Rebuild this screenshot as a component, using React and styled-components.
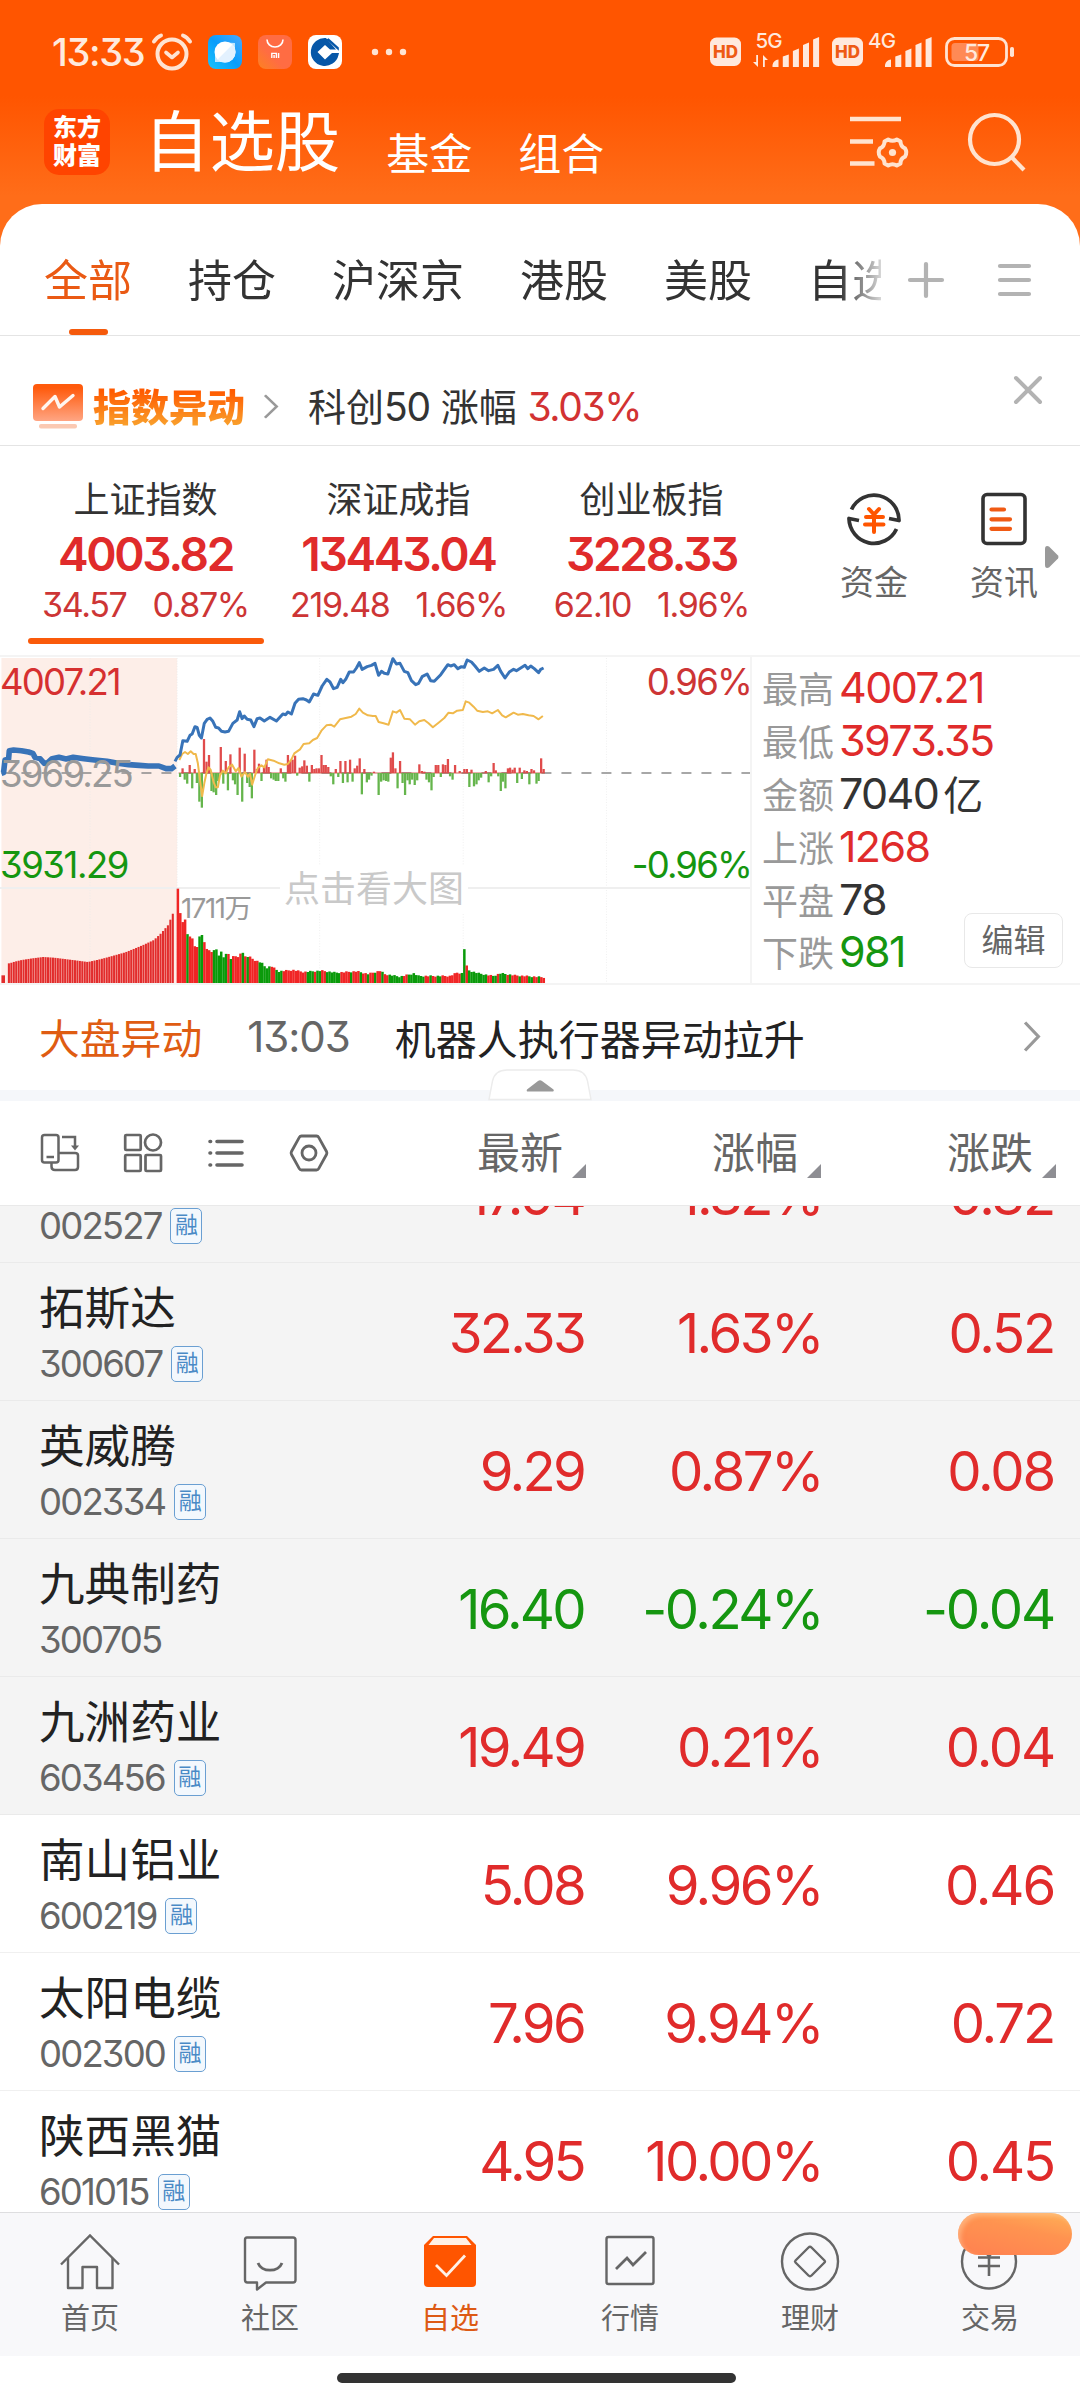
// App.jsx
import React from "react";
import styled, { createGlobalStyle } from "styled-components";

const RED = "#e02b2b";
const GREEN = "#159610";
const ORANGE = "#ff5500";

const GlobalStyle = createGlobalStyle`
  * {
    box-sizing: border-box;
  }

  body {
    margin: 0;
    background: #fff;
    font-family: Inter, "Noto Sans CJK SC", sans-serif;
    font-feature-settings: "cv09" 1;
    color: #333;
  }

  svg {
    display: block;
    flex: none;
    overflow: visible;
  }
`;

const Screen = styled.div`
  width: 1080px;
  height: 2400px;
  overflow: hidden;
  display: flex;
  flex-direction: column;
  white-space: nowrap;
`;

const Num = styled.span`
  font-size: ${({ size }) => size}px;
  font-weight: ${({ weight }) => weight || 400};
  color: ${({ color }) => color || "inherit"};
  letter-spacing: ${({ track = -0.05 }) => track}em;
`;

/* ---------- header ---------- */

const Header = styled.header`
  height: 250px;
  margin-bottom: -46px;
  background: linear-gradient(#ff5500 0, #ff5500 96px, #ff6d19 196px);
  color: #fff;
`;

const StatusBar = styled.div`
  height: 104px;
  padding: 0 65px 0 52px;
  display: flex;
  align-items: center;
  color: #ffeadd;
`;

const AppIcons = styled.div`
  display: flex;
  align-items: center;
  gap: 16px;
  margin: 0 auto 0 8px;
`;

const MoreApps = styled.div`
  margin-left: 13px;
`;

const Signals = styled.div`
  display: flex;
  align-items: center;
  gap: 12px;
`;

const TitleBar = styled.div`
  height: 76px;
  padding: 0 54px 0 44px;
  display: flex;
  align-items: center;
`;

const Logo = styled.div`
  width: 66px;
  height: 66px;
  margin-right: 34px;
  border-radius: 15px;
  background: #ff4400;
  font-size: 24px;
  font-weight: 900;
  line-height: 28px;
  padding-top: 5px;
  text-align: center;
`;

const Title = styled.h1`
  margin: 2px 0 0;
  font-size: 65.4px;
  font-weight: 400;
  line-height: 76px;
`;

const SubTitle = styled.span`
  font-size: 43px;
  line-height: 50px;
  margin: 23px 0 0 46px;
`;

const HeaderIcons = styled.div`
  margin-left: auto;
  display: flex;
  gap: 58px;
`;

/* ---------- group tabs ---------- */

const Card = styled.div`
  height: 132px;
  flex: none;
  border-bottom: 1px solid #e4e4e4;
  border-radius: 42px 42px 0 0;
  background: #fff;
  display: flex;
  align-items: center;
  padding: 0 49px 0 44px;
`;

const Groups = styled.nav`
  width: 837px;
  height: 131px;
  overflow: hidden;
  display: flex;
  gap: 56px;
  mask-image: linear-gradient(90deg, #000 795px, rgba(0, 0, 0, 0.2) 837px);
`;

const Group = styled.span`
  flex: none;
  font-size: 44px;
  line-height: 154px;
  color: ${({ active }) => (active ? "#ea5a14" : "#333")};
  height: 131px;
  display: flex;
  flex-direction: column;
  align-items: center;

  &::after {
    content: "";
    width: 39px;
    height: 6px;
    flex: none;
    margin-top: -29px;
    border-radius: 3px;
    background: ${({ active }) => (active ? "#f55a0c" : "transparent")};
  }
`;

const GroupTools = styled.div`
  flex: 1;
  display: flex;
  justify-content: space-between;
  padding: 21px 0 0 27px;
`;

/* ---------- notice ---------- */

const Notice = styled.div`
  height: 110px;
  flex: none;
  border-bottom: 1px solid #e4e4e4;
  padding: 32px 38px 0 33px;
  display: flex;
  align-items: center;
`;

const NoticeName = styled.b`
  margin: 0 19px 0 10px;
  font-size: 38px;
  font-weight: 900;
  line-height: 46px;
  background: linear-gradient(#ff5a00 15%, #f9a02c 90%);
  background-clip: text;
  -webkit-background-clip: text;
  color: transparent;
`;

const NoticeText = styled.span`
  margin-left: 30px;
  font-size: 38px;
  line-height: 46px;
`;

const CloseButton = styled.div`
  margin: -33px 0 0 auto;
`;

/* ---------- indexes ---------- */

const IndexRow = styled.div`
  height: 209px;
  flex: none;
  display: flex;
  padding: 0 19px;
`;

const IndexCell = styled.div`
  width: 253px;
  padding-top: 32px;
  display: flex;
  flex-direction: column;
  align-items: center;
  color: ${RED};

  &::after {
    content: "";
    width: 236px;
    height: 6px;
    margin-top: 13px;
    border-radius: 3px;
    background: ${({ active }) => (active ? "#fa5a0a" : "transparent")};
  }
`;

const IndexName = styled.span`
  font-size: 36px;
  line-height: 44px;
  color: #333;
`;

const IndexValue = styled(Num)`
  line-height: 52px;
  margin-top: 6px;
`;

const IndexChange = styled.div`
  display: flex;
  gap: 26px;
  line-height: 40px;
  margin-top: 5px;
  color: #cd3535;
`;

const Shortcuts = styled.div`
  margin-left: 31px;
  display: flex;
`;

const Shortcut = styled.div`
  width: 130px;
  padding-top: 45px;
  display: flex;
  flex-direction: column;
  align-items: center;
  gap: 13px;
  font-size: 34px;
  line-height: 46px;
  color: #666;
`;

const MoreArrow = styled.div`
  padding-top: 99px;
  margin-left: -24px;
`;

/* ---------- chart ---------- */

const ChartPanel = styled.div`
  height: 330px;
  flex: none;
  border-top: 2px solid #f4f4f4;
  border-bottom: 2px solid #f4f4f4;
  display: flex;
`;

const ChartBox = styled.div`
  position: relative;
  width: 752px;
  border-right: 2px solid #f4f4f4;
`;

/* axis captions float over the plot */
const Caption = styled(Num)`
  position: absolute;
  top: ${({ top }) => top}px;
  ${({ left }) => (left === undefined ? "right: -1px;" : `left: ${left}px;`)}
  line-height: 36px;
`;

const ChartHint = styled.span`
  position: absolute;
  top: 208px;
  left: 280px;
  width: 188px;
  background: #fff;
  text-align: center;
  font-size: 36px;
  line-height: 48px;
  color: #c9c9c9;
`;

const Stats = styled.div`
  position: relative;
  flex: 1;
  padding: 4px 0 0 10px;
`;

const Stat = styled.div`
  display: flex;
  align-items: center;
  gap: 5px;
  height: 52.8px;
  font-size: 36px;
  color: #999;
`;

const Unit = styled.span`
  font-size: 40px;
  color: #333;
`;

const EditButton = styled.div`
  position: absolute;
  right: 17px;
  top: 256px;
  width: 99px;
  height: 55px;
  border: 1px solid #e8e8e8;
  border-radius: 8px;
  background: #fff;
  font-size: 32px;
  line-height: 54px;
  text-align: center;
  color: #666;
`;

/* ---------- news ---------- */

const News = styled.div`
  position: relative;
  height: 116px;
  flex: none;
  border-bottom: 11px solid #f5f7fa;
  padding: 0 40px 2px 39px;
  display: flex;
  align-items: center;
  font-size: 40.8px;
  color: #222;
`;

const NewsTag = styled.span`
  color: #df5c12;
`;

const NewsTime = styled(Num)`
  color: #666;
  margin-left: 45px;
`;

const NewsText = styled.span`
  margin: 0 auto 0 45px;
  font-size: 41px;
`;

const Handle = styled.div`
  position: absolute;
  left: 488px;
  top: 84px;
`;

/* ---------- table ---------- */

const TableHead = styled.div`
  height: 105px;
  flex: none;
  border-bottom: 1px solid #e9e9e9;
  padding-left: 41px;
  display: flex;
  align-items: center;
  color: #666;
`;

const Tools = styled.div`
  width: 345px;
  display: flex;
  gap: 45px;
`;

const HeadCell = styled.div`
  width: ${({ width }) => width}px;
  display: flex;
  justify-content: flex-end;
  gap: 9px;
  font-size: 43px;
  line-height: 54px;

  &::after {
    content: "";
    width: 14px;
    height: 14px;
    margin-top: 38px;
    background: #8e8e93;
    clip-path: polygon(100% 0, 100% 100%, 0 100%);
  }
`;

const List = styled.div`
  height: 1006px;
  flex: none;
  overflow: hidden;
`;

const Row = styled.div`
  height: 138px;
  padding-left: 39px;
  display: flex;
  align-items: center;
  background: ${({ pinned }) => (pinned ? "#f4f4f4" : "#fff")};
  border-bottom: 1px solid ${({ pinned }) => (pinned ? "#eaeaea" : "#f0f0f0")};
  color: ${({ down }) => (down ? GREEN : RED)};

  &:first-child {
    margin-top: -81px;
  }
`;

const Stock = styled.div`
  width: 304px;
  align-self: flex-start;
  padding-top: 19px;
`;

const StockName = styled.div`
  height: 54px;
  font-size: 45.6px;
  line-height: 54px;
  color: #222;
`;

const StockCode = styled.div`
  margin-top: 8px;
  height: 40px;
  display: flex;
  align-items: center;
  gap: 9px;
  color: #666;
`;

const Badge = styled.span`
  width: 32px;
  height: 36px;
  border: 1.5px solid #6a9fd2;
  border-radius: 5px;
  background: #f3f8fd;
  color: #4a8ac6;
  font-size: 23px;
  line-height: 33px;
  text-align: center;
`;

const Cell = styled.div`
  width: ${({ width }) => width}px;
  padding-top: 2px;
  text-align: right;
`;

/* ---------- bottom bar ---------- */

const TabBar = styled.nav`
  height: 144px;
  flex: none;
  border-top: 1px solid #dedee0;
  background: #f8f8fa;
  display: flex;
`;

const Tab = styled.div`
  position: relative;
  width: 180px;
  padding-top: 18px;
  display: flex;
  flex-direction: column;
  align-items: center;
  font-size: 29px;
  line-height: 36px;
  gap: 10px;
  color: ${({ active }) => (active ? "#dd5a14" : "#666")};
`;

const Promo = styled.div`
  position: absolute;
  left: 58px;
  top: 0;
  width: 114px;
  height: 42px;
  border-radius: 21px;
  background: linear-gradient(12deg, #ff8550 15%, #ff9350 60%, #ffb257);
  box-shadow: inset 3px 3px 4px rgba(255, 205, 160, 0.5);
`;

const HomeBar = styled.div`
  width: 399px;
  height: 10px;
  margin: 17px auto 0 337px;
  border-radius: 5px;
  background: #333;
`;

/* ---------- icons ---------- */

const AlarmIcon = () => (
  <svg width="40" height="38" viewBox="0 0 40 38" fill="none" stroke="#ffe3d2" strokeLinecap="round">
    <circle cx="20" cy="21" r="14.5" strokeWidth="4" />
    <path d="M14 19.5l6 5 6-5" strokeWidth="3.6" strokeLinejoin="round" />
    <path d="M2 8.500q3-4.500 7-6M38 8.500q-3-4.500-7-6" strokeWidth="4" />
  </svg>
);

const BrowserIcon = () => (
  <svg width="34" height="34" viewBox="0 0 34 34">
    <defs>
      <linearGradient id="sky" x1="1" y1="0" x2="0" y2="1">
        <stop offset="0" stopColor="#4aa8fb" />
        <stop offset="0.5" stopColor="#0a9dfb" />
        <stop offset="1" stopColor="#18c4fb" />
      </linearGradient>
    </defs>
    <rect width="34" height="34" rx="8" fill="url(#sky)" />
    <path d="M7 27V19L19 27zM27 8V15L18 7.500z" fill="#bfe6fe" />
    <circle cx="17" cy="17" r="10.500" fill="#fff" />
    <path d="M24.500 9.500A10.500 10.500 0 0 1 9.500 24.500z" fill="#e3f1fe" />
  </svg>
);

const StoreIcon = () => (
  <svg width="34" height="34" viewBox="0 0 34 34" fill="none" stroke="#fff" strokeWidth="1.6">
    <defs>
      <linearGradient id="bag" x1="1" y1="0" x2="0" y2="1">
        <stop offset="0.6" stopColor="#ff6c43" />
        <stop offset="1" stopColor="#fd8220" />
      </linearGradient>
    </defs>
    <rect width="34" height="34" rx="8" fill="url(#bag)" stroke="none" />
    <path d="M9 4.500a8 7.500 0 0 0 16 0" />
    <path d="M13.800 23v-4.600h4.600V23M16.100 20v3M20.600 18v5" strokeWidth="1.4" />
  </svg>
);

const BankIcon = () => (
  <svg width="34" height="34" viewBox="0 0 34 34">
    <rect width="34" height="34" rx="8" fill="#fff" />
    <path
      d="M18 3A14 14 0 1 0 30.500 20L31 18H24L17 24.500L9.500 17L17 10l5 4.500h6z"
      fill="#0657a8"
    />
    <path d="M20.500 3.200l10.300 9.400v3.200L18.500 4.500z" fill="#0657a8" />
  </svg>
);

const DotsIcon = () => (
  <svg width="36" height="8" viewBox="0 0 36 8" fill="#ffe3d2">
    <circle cx="4" cy="4" r="3.200" />
    <circle cx="18" cy="4" r="3.200" />
    <circle cx="32" cy="4" r="3.200" />
  </svg>
);

const Signal = ({ label, x, width, arrows }) => (
  <svg width={width} height="40" viewBox={`0 0 ${width} 40`} fill="#ffe9dd">
    <rect y="5.500" width="31" height="28.500" rx="6.500" />
    <text x="15.500" y="26" fontSize="17" fontWeight="800" textAnchor="middle" fill="#ee5a15">
      HD
    </text>
    <text x={x - 17} y="16" fontSize="20.500" fontWeight="500" letterSpacing="-0.8">
      {label}
    </text>
    {arrows && (
      <path d="M48 23v12l-5-5h3.200v-7zM53 35V23l5 5h-3.200v7z" />
    )}
    <path
      d={`M${x} 35v-2q1-5 6-5.500v7.500zM${x + 10.300} 35V24.500l6-2V35zM${x + 20.400} 35V19l6-2.500V35zM${x + 30.500} 35V13l6-2.500V35zM${x + 40.600} 35V7.500l6-2.500V35z`}
    />
  </svg>
);

const BatteryIcon = () => (
  <svg width="70" height="32" viewBox="0 0 70 32">
    <rect x="1.500" y="2.500" width="60" height="27" rx="8" fill="none" stroke="#ffe3d2" strokeWidth="2.800" />
    <rect x="6.500" y="7" width="27" height="18" rx="3.500" fill="#ff8a55" />
    <rect x="65" y="11" width="4" height="10" rx="1.800" fill="#ffe3d2" />
    <text x="31.500" y="24.500" fontSize="23" fontWeight="500" textAnchor="middle" fill="#ffe9dd" letterSpacing="-1.200">
      57
    </text>
  </svg>
);

const ListSettingsIcon = () => (
  <svg width="60" height="58" viewBox="0 0 60 58" fill="none" stroke="#ffe3cf" strokeWidth="4.400">
    <path d="M0 7h51M0 29.500h23M0 51.500h24.500" />
    <path
      strokeWidth="4"
      strokeLinejoin="round"
      d="M38.200 27.500Q42.500 30 46.800 27.500L50.500 29.600Q50.500 34.500 55 36.400Q57.600 40.500 55 44.600Q50.500 46.500 50.500 51.400L46.800 53.500Q42.500 51 38.200 53.500L34.500 51.400Q34.500 46.500 30 44.600Q27.400 40.500 30 36.400Q34.500 34.500 34.500 29.600Z"
    />
    <circle cx="42.500" cy="40.500" r="3.600" fill="#ffe3cf" stroke="none" />
  </svg>
);

const SearchIcon = () => (
  <svg width="58" height="60" viewBox="0 0 58 60" fill="none" stroke="#ffe3cf" strokeWidth="4.200">
    <circle cx="26.500" cy="27.500" r="24.500" />
    <path d="M43.500 45L56 58" />
  </svg>
);

const PlusIcon = () => (
  <svg width="36" height="36" viewBox="0 0 36 36" stroke="#b3b3b3" strokeWidth="4.200" strokeLinecap="round">
    <path d="M2 18h32M18 2v32" />
  </svg>
);

const MenuIcon = () => (
  <svg width="33" height="36" viewBox="0 0 33 36" stroke="#b3b3b3" strokeWidth="4.200" strokeLinecap="round">
    <path d="M2 4h29M2 18h29M2 32h29" />
  </svg>
);

const NoticeIcon = () => (
  <svg width="50" height="46" viewBox="0 0 50 46">
    <defs>
      <linearGradient id="board" x1="0" y1="0" x2="0" y2="1">
        <stop offset="0.1" stopColor="#ff5a0c" />
        <stop offset="1" stopColor="#ffa583" />
      </linearGradient>
    </defs>
    <rect width="50" height="37" rx="4" fill="url(#board)" />
    <rect x="6" y="40" width="38" height="4.500" rx="2" fill="#fbc9b2" />
    <path d="M10 24.500l12-12 4.500 10.500L40 11.500" fill="none" stroke="#fff6f0" strokeWidth="3.400" strokeLinecap="round" strokeLinejoin="round" />
  </svg>
);

const Chevron = ({ width, height, stroke = "#999" }) => (
  <svg width={width} height={height} viewBox="0 0 15 30" preserveAspectRatio="none" fill="none" stroke={stroke} strokeWidth="3">
    <path d="M1 1.500L13.500 15L1 28.500" />
  </svg>
);

const CloseIcon = () => (
  <svg width="28" height="28" viewBox="0 0 28 28" stroke="#b3b3b3" strokeWidth="4" strokeLinecap="round">
    <path d="M2 2l24 24M26 2L2 26" />
  </svg>
);

const MoneyIcon = () => (
  <svg width="54" height="56" viewBox="0 0 54 56" fill="none" stroke="#333" strokeWidth="3.800">
    <path d="M4.500 18.500A25 25.500 0 0 1 52 29.500L42 27.500" strokeLinejoin="round" />
    <path d="M49.500 38A25 25.500 0 0 1 2 27.500L12 29.500" strokeLinejoin="round" />
    <path
      d="M22 18l5 5.500 5-5.500M19 26h17M18 33.500h18.500M27 24v17"
      stroke="#ff5500"
      strokeWidth="4"
      strokeLinecap="round"
    />
  </svg>
);

const InfoIcon = () => (
  <svg width="46" height="56" viewBox="0 0 46 56" fill="none" stroke="#333" strokeWidth="3.600">
    <rect x="2" y="3.500" width="42" height="49" rx="4" />
    <path d="M10.500 18.500h12.500M10.500 28.300h18.500M10.500 37.800h18.500" stroke="#f05a14" strokeWidth="4.200" strokeLinecap="round" />
  </svg>
);

const ArrowIcon = () => (
  <svg width="14" height="24" viewBox="0 0 14 24" fill="#999">
    <path d="M0 4Q0 0 4 1.500L13 10.500Q14 12 13 13.500L4 22.500Q0 24 0 20z" />
  </svg>
);

const RotateIcon = () => (
  <svg width="38" height="40" viewBox="0 0 38 40" fill="none" stroke="#666" strokeWidth="2.500">
    <path d="M10.500 29.500v4q0 3.500 3.500 3.500h20q3 0 3-3V22.500q0-2.500-3-2.500H17.500" />
    <rect x="1" y="2" width="16.500" height="27.500" rx="2.500" />
    <path d="M5.500 24h7.500" />
    <path d="M21 4h13v10" />
    <path d="M30 12.500h8l-4 5z" fill="#666" stroke="none" />
  </svg>
);

const GridIcon = () => (
  <svg width="38" height="40" viewBox="0 0 38 40" fill="none" stroke="#666" strokeWidth="2.700">
    <rect x="1.200" y="2" width="15.500" height="15" rx="1" />
    <circle cx="29" cy="9.500" r="8" />
    <rect x="1.200" y="22" width="15.500" height="16" rx="1" />
    <rect x="21.500" y="22" width="15.500" height="16" rx="1" />
  </svg>
);

const ListIcon = () => (
  <svg width="38" height="40" viewBox="0 0 38 40" stroke="#666" strokeWidth="3.600" strokeLinecap="round">
    <path d="M3 8.500h.6M10 8.500h25M3 20h.6M10 20h25M3 32h.6M10 32h25" />
  </svg>
);

const NutIcon = () => (
  <svg width="38" height="40" viewBox="0 0 38 40" fill="none" stroke="#666" strokeWidth="2.800">
    <path
      d="M11.500 3h15q1.500 0 2.200 1.300L36.500 18.500q.8 1.500 0 3L28.700 35.700Q28 37 26.500 37h-15q-1.500 0-2.200-1.300L1.500 21.500q-.8-1.500 0-3L9.300 4.300Q10 3 11.500 3z"
    />
    <circle cx="19" cy="20" r="7" />
  </svg>
);

const HandleIcon = () => (
  <svg width="104" height="32" viewBox="0 0 104 32">
    <path d="M1 30.500L4.500 12Q7 1 19 1H85Q97 1 99.500 12L103 30.500z" fill="#fff" stroke="#ececec" strokeWidth="1.400" />
    <path d="M39 20.500L50 12q2-1.500 4 0L65.500 20.500q1 2-1.500 2H40q-2 0-1-2z" fill="#999" />
  </svg>
);

const HomeIcon = () => (
  <svg width="60" height="60" viewBox="0 0 60 60" fill="none" stroke="#666" strokeWidth="2.400">
    <path d="M1 33.500L30 4.500L59 33.500" />
    <path d="M8 27V57H22.500V36H37V57H52.500V27" strokeLinejoin="round" />
  </svg>
);

const ChatIcon = () => (
  <svg width="60" height="60" viewBox="0 0 60 60" fill="none" stroke="#666" strokeWidth="2.400" strokeLinejoin="round">
    <path d="M7 6.500h46q2.500 0 2.500 2.500v40q0 2.500-2.500 2.500H26L17 58.500V51.500H7.500Q5 51.500 5 49V9Q5 6.500 7 6.500z" />
    <path d="M18 32a12.500 10 0 0 0 24 0" strokeWidth="2.800" />
  </svg>
);

const BoxIcon = () => (
  <svg width="60" height="60" viewBox="0 0 60 60">
    <path d="M13 5H47L56 14V52q0 4-4 4H8q-4 0-4-4V14z" fill={ORANGE} />
    <path d="M14 7H46L51.500 14H8.500z" fill="#fff1e6" />
    <path d="M16 34l10.500 10.500L45 24.500" fill="none" stroke="#fff1e6" strokeWidth="2.800" />
  </svg>
);

const QuoteIcon = () => (
  <svg width="60" height="60" viewBox="0 0 60 60" fill="none" stroke="#666" strokeWidth="2.400">
    <rect x="6.500" y="6" width="47" height="47" rx="2" />
    <path d="M16 38l11-11 6 7 13-13" strokeWidth="2.800" />
  </svg>
);

const WealthIcon = () => (
  <svg width="60" height="60" viewBox="0 0 60 60" fill="none" stroke="#666" strokeWidth="2.400">
    <circle cx="30" cy="30.500" r="28" />
    <path d="M28.500 16.500q1.500-1.500 3 0L44.500 29.500q1 1 0 2L31.500 44.500q-1.500 1.500-3 0L15.500 31.500q-1-1 0-2z" />
  </svg>
);

const TradeIcon = () => (
  <svg width="60" height="60" viewBox="0 0 60 60" fill="none" stroke="#666" strokeWidth="2.400">
    <circle cx="29" cy="30.500" r="27" />
    <path d="M19 15l10 10 10-10M18 26.500h22M18 35h22M29 24v21" strokeWidth="2.600" />
  </svg>
);

/* ---------- data ---------- */

const groups = ["全部", "持仓", "沪深京", "港股", "美股", "自选"];

const indexes = [
  { name: "上证指数", value: "4003.82", diff: "34.57", pct: "0.87%" },
  { name: "深证成指", value: "13443.04", diff: "219.48", pct: "1.66%" },
  { name: "创业板指", value: "3228.33", diff: "62.10", pct: "1.96%" },
];

const stats = [
  { label: "最高", value: "4007.21", color: RED },
  { label: "最低", value: "3973.35", color: RED },
  { label: "金额", value: "7040", unit: "亿", color: "#333" },
  { label: "上涨", value: "1268", color: RED },
  { label: "平盘", value: "78", color: "#333" },
  { label: "下跌", value: "981", color: GREEN },
];

const stocks = [
  { code: "002527", last: "17.94", pct: "1.82%", diff: "0.32", margin: true, pinned: true },
  { name: "拓斯达", code: "300607", last: "32.33", pct: "1.63%", diff: "0.52", margin: true, pinned: true },
  { name: "英威腾", code: "002334", last: "9.29", pct: "0.87%", diff: "0.08", margin: true, pinned: true },
  { name: "九典制药", code: "300705", last: "16.40", pct: "-0.24%", diff: "-0.04", pinned: true, down: true },
  { name: "九洲药业", code: "603456", last: "19.49", pct: "0.21%", diff: "0.04", margin: true, pinned: true },
  { name: "南山铝业", code: "600219", last: "5.08", pct: "9.96%", diff: "0.46", margin: true },
  { name: "太阳电缆", code: "002300", last: "7.96", pct: "9.94%", diff: "0.72", margin: true },
  { name: "陕西黑猫", code: "601015", last: "4.95", pct: "10.00%", diff: "0.45", margin: true },
];

const tabs = [
  { label: "首页", Icon: HomeIcon },
  { label: "社区", Icon: ChatIcon },
  { label: "自选", Icon: BoxIcon, active: true },
  { label: "行情", Icon: QuoteIcon },
  { label: "理财", Icon: WealthIcon },
  { label: "交易", Icon: TradeIcon, promo: true },
];

/* ---------- intraday chart ---------- */

const preOpenLine =
  "4,400 10,398 14,360 24,358 26,332 38,330 60,332 80,336 92,340 98,352 112,356 124,370 134,368 146,356 165,352 185,357 205,352 235,356 265,360 300,364 330,370 360,374 390,376 415,378 445,378 465,386 480,386 490,378";

const indexLine =
  "490,364 496,352 504,345 512,302 524,304 532,286 538,282 546,260 552,262 558,286 564,294 572,250 580,238 588,234 596,244 604,262 612,264 620,274 630,276 640,274 652,250 664,240 671,215 678,236 684,228 692,238 702,240 711,260 720,236 728,234 740,243 756,232 774,243 792,222 800,224 806,216 816,222 826,190 836,178 848,176 858,180 866,186 878,162 890,166 902,138 915,118 924,126 934,146 944,142 954,118 960,128 968,118 978,96 990,96 998,84 1006,68 1014,88 1028,80 1040,76 1050,70 1060,106 1068,94 1076,100 1086,102 1100,56 1110,72 1120,70 1132,94 1142,98 1152,122 1164,134 1172,130 1182,110 1196,102 1206,122 1216,124 1234,104 1254,74 1262,78 1272,74 1282,86 1292,80 1300,82 1308,60 1320,66 1330,78 1342,94 1356,84 1368,92 1382,88 1394,76 1402,94 1414,114 1426,96 1438,88 1446,92 1458,84 1470,76 1478,86 1486,78 1496,86 1508,98 1514,88 1522,84";

const averageLine =
  "502,360 510,342 518,336 526,342 534,334 542,342 548,342 554,370 560,420 566,468 572,430 578,400 584,382 590,390 598,426 604,442 610,442 616,406 624,392 632,400 640,382 650,374 660,394 668,384 676,410 686,396 694,410 700,402 706,434 714,406 722,384 732,376 740,382 750,358 766,362 782,370 796,374 806,372 816,358 824,340 840,328 850,312 866,310 876,300 888,294 900,272 914,256 926,254 936,260 952,238 968,234 984,230 996,222 1006,206 1016,218 1030,226 1044,228 1052,228 1060,246 1074,250 1088,254 1100,214 1110,218 1120,210 1132,236 1148,238 1162,254 1174,244 1188,240 1200,250 1212,262 1228,248 1244,234 1256,218 1268,220 1280,212 1296,210 1304,184 1314,188 1326,200 1336,212 1352,216 1366,214 1378,220 1394,210 1406,226 1416,232 1438,218 1450,224 1464,222 1480,226 1494,228 1508,238 1520,228";

// up / down ticks around the previous close, [x, length]
const ticks = [
  [504, -12], [511, 14], [517, -20], [524, -32], [531, 24], [538, -46], [545, 12], [551, -30], [558, -86], [565, -104],
  [571, 102], [578, 34], [585, 54], [592, -54], [598, -58], [605, -66], [611, -24], [618, 78], [625, -32], [632, 36],
  [638, -52], [645, 56], [652, -22], [658, -34], [665, -66], [671, 76], [678, -86], [685, 58], [692, -30], [699, -42],
  [705, -76], [712, 70], [719, 12], [725, 28], [732, -24], [739, 16], [746, 40], [752, 18], [759, -16], [766, -20],
  [772, -24], [779, -24], [786, 14], [793, -16], [799, -26], [806, 54], [812, 36], [819, 40], [826, 52], [832, -8],
  [839, 16], [846, 20], [852, 38], [859, 22], [866, -26], [873, 24], [880, 12], [886, 14], [893, 14], [900, 54],
  [906, 24], [912, 24], [919, 18], [926, -10], [933, -34], [940, 12], [947, -12], [953, 36], [960, -30], [967, 36],
  [973, -28], [980, 40], [987, -26], [993, 14], [1000, 22], [1007, 44], [1013, -64], [1020, 12], [1027, -28], [1033, -20],
  [1040, -8], [1047, 4], [1060, -66], [1067, -26], [1074, -22], [1081, -24], [1087, -26], [1094, 46], [1100, 62], [1107, 14],
  [1113, -46], [1120, 36], [1127, -30], [1134, -66], [1141, -22], [1147, -34], [1154, -20], [1161, -36], [1168, -22], [1174, 26],
  [1181, 6], [1188, 4], [1194, -20], [1201, -28], [1208, -52], [1214, -12], [1220, 24], [1227, 24], [1234, -12], [1240, 26],
  [1247, 24], [1254, 42], [1260, -10], [1267, -20], [1274, 24], [1287, 6], [1300, 12], [1307, 12], [1314, -42], [1320, 10],
  [1327, -40], [1334, -34], [1340, -22], [1347, -14], [1360, 6], [1368, -28], [1375, -10], [1382, 30], [1388, 8], [1395, -10],
  [1402, -54], [1408, -26], [1415, -46], [1422, 14], [1428, 16], [1435, 10], [1441, 16], [1448, -30], [1455, 16], [1461, -18],
  [1468, 8], [1475, 6], [1482, -34], [1488, 12], [1495, 8], [1502, -32], [1508, -24], [1515, 44], [1522, 12],
];

const preOpenVolume = [
  [26, 970], [40, 965], [60, 960], [90, 955], [120, 951], [150, 953], [180, 957], [210, 961], [245, 966],
  [275, 959], [300, 952], [350, 937], [380, 924], [400, 915], [430, 900], [450, 880], [470, 855], [488, 808],
];

const volume = [
  [498, 748], [505, 822], [512, 846], [518, 838], [524, 880], [532, 892], [540, 896], [546, 920], [552, 922], [557, 890],
  [564, 883], [571, 903], [578, 924], [590, 936], [600, 932], [606, 928], [612, 946], [618, 932], [625, 952], [638, 938],
  [645, 956], [658, 945], [665, 956], [678, 932], [686, 950], [698, 950], [712, 960], [732, 968], [745, 984], [759, 978],
  [780, 994], [820, 990], [850, 996], [900, 992], [940, 998], [1000, 994], [1030, 1002], [1066, 992], [1075, 1002],
  [1120, 1010], [1160, 1000], [1170, 1008], [1260, 1008], [1280, 998], [1294, 1000], [1300, 926], [1307, 980], [1314, 992],
  [1340, 1000], [1380, 1008], [1402, 1000], [1440, 1006], [1525, 1012],
];

// g / r per minute
const volumeColors =
  "rrrrgrrrrggrrrrggggggrgrrrrgrgrrrrgggggrrgggrrrrrrrrrrgggrggrrggggggrrrrgrrrgrrgrrgrrgrrggggggrrgggggggrrgrrggrrrrrrrrggrggggggggrrggrgggrgrrrgrrrggrrgrr";

const levelAt = (profile, x) => {
  const next = profile.findIndex(([px]) => px >= x);
  if (next <= 0) return profile[next === 0 ? 0 : profile.length - 1][1];
  const [x0, y0] = profile[next - 1];
  const [x1, y1] = profile[next];
  return y0 + ((y1 - y0) * (x - x0)) / (x1 - x0);
};

const preOpenBars = Array.from({ length: 68 }, (_, i) => 24 + i * 6.85);
const minuteBars = Array.from({ length: 153 }, (_, i) => 498 + i * 6.74);

function IntradayChart() {
  return (
    <svg width="750" height="326" viewBox="0 51 2100 978" preserveAspectRatio="none" fill="none">
      <rect x="4" y="54" width="492" height="975" fill="#fdeee8" />
      {[252, 496, 895, 1297, 1698].map((x) => (
        <path key={x} d={`M${x} 54V1029`} stroke="#e9e9e9" strokeWidth="2" strokeDasharray="3 5" />
      ))}
      <path d="M0 744H2100" stroke="#efefef" strokeWidth="6" />
      <path d="M4 399H2100" stroke="#8a8a8a" strokeWidth="5" strokeDasharray="28 28" />
      <rect x="4" y="1006" width="10" height="23" fill="#e22c2c" />
      {preOpenBars.map((x, i) => {
        const y = levelAt(preOpenVolume, x);
        return <rect key={i} x={x - 2} y={y} width="5.800" height={1029 - y} fill="#e22c2c" />;
      })}
      {minuteBars.map((x, i) => {
        const y = levelAt(volume, x) + ((i * 7) % 5) - 2;
        return (
          <rect
            key={i}
            x={x - 3.4}
            y={y}
            width="7"
            height={1029 - y}
            fill={volumeColors[i] === "g" ? "#0a9a0a" : "#f02525"}
          />
        );
      })}
      <path d="M500 399H1526" stroke="#c94a3c" strokeWidth="2.500" />
      {ticks.map(([x, len]) => (
        <rect
          key={x}
          x={x - 3}
          y={len > 0 ? 399 - len : 399}
          width="6.400"
          height={Math.abs(len)}
          fill={len > 0 ? "#e04b4b" : "#65b54c"}
        />
      ))}
      <polyline points={averageLine} stroke="#f0b94c" strokeWidth="2" vectorEffect="non-scaling-stroke" strokeLinejoin="round" />
      <polyline points={indexLine} stroke="#3873b8" strokeWidth="3" vectorEffect="non-scaling-stroke" strokeLinejoin="round" />
      <polyline points={preOpenLine} stroke="#3873b8" strokeWidth="5.600" vectorEffect="non-scaling-stroke" strokeLinejoin="round" />
    </svg>
  );
}

/* ---------- page ---------- */

export default function App() {
  return (
    <Screen>
      <GlobalStyle />

      <Header>
        <StatusBar>
          <Num size={38} weight={500} track={-0.035}>13:33</Num>
          <AppIcons>
            <AlarmIcon />
            <BrowserIcon />
            <StoreIcon />
            <BankIcon />
            <MoreApps>
              <DotsIcon />
            </MoreApps>
          </AppIcons>
          <Signals>
            <Signal label="5G" x={62.5} width={110} arrows />
            <Signal label="4G" x={53} width={101} />
            <BatteryIcon />
          </Signals>
        </StatusBar>
        <TitleBar>
          <Logo>
            东方
            <br />
            财富
          </Logo>
          <Title>自选股</Title>
          <SubTitle>基金</SubTitle>
          <SubTitle>组合</SubTitle>
          <HeaderIcons>
            <ListSettingsIcon />
            <SearchIcon />
          </HeaderIcons>
        </TitleBar>
      </Header>

      <Card>
        <Groups>
          {groups.map((name, i) => (
            <Group key={name} active={i === 0 ? 1 : undefined}>
              {name}
            </Group>
          ))}
        </Groups>
        <GroupTools>
          <PlusIcon />
          <MenuIcon />
        </GroupTools>
      </Card>

      <Notice>
        <NoticeIcon />
        <NoticeName>指数异动</NoticeName>
        <Chevron width={14} height={25} />
        <NoticeText>
          科创<Num size={39} track={-0.03}>50</Num> 涨幅{" "}
          <Num size={39} track={-0.035} color="#d23232">3.03%</Num>
        </NoticeText>
        <CloseButton>
          <CloseIcon />
        </CloseButton>
      </Notice>

      <IndexRow>
        {indexes.map((item, i) => (
          <IndexCell key={item.name} active={i === 0 ? 1 : undefined}>
            <IndexName>{item.name}</IndexName>
            <IndexValue size={46} weight={600}>{item.value}</IndexValue>
            <IndexChange>
              <Num size={34} track={-0.04}>{item.diff}</Num>
              <Num size={34} track={-0.04}>{item.pct}</Num>
            </IndexChange>
          </IndexCell>
        ))}
        <Shortcuts>
          <Shortcut>
            <MoneyIcon />
            资金
          </Shortcut>
          <Shortcut>
            <InfoIcon />
            资讯
          </Shortcut>
          <MoreArrow>
            <ArrowIcon />
          </MoreArrow>
        </Shortcuts>
      </IndexRow>

      <ChartPanel>
        <ChartBox>
          <IntradayChart />
          <ChartHint>点击看大图</ChartHint>
          <Caption size={36.5} color="#d63030" left={0} top={7}>4007.21</Caption>
          <Caption size={36.5} color="#999" left={0} top={99}>3969.25</Caption>
          <Caption size={36.5} track={-0.04} color={GREEN} left={0} top={190}>3931.29</Caption>
          <Caption size={27.5} color="#999" left={181} top={233}>1711万</Caption>
          <Caption size={36.5} color="#cd3535" top={7}>0.96%</Caption>
          <Caption size={36.5} color={GREEN} top={190}>-0.96%</Caption>
        </ChartBox>
        <Stats>
          {stats.map((s) => (
            <Stat key={s.label}>
              {s.label}
              <Num size={43} track={-0.038} color={s.color}>{s.value}</Num>
              {s.unit && <Unit>{s.unit}</Unit>}
            </Stat>
          ))}
          <EditButton>编辑</EditButton>
        </Stats>
      </ChartPanel>

      <News>
        <NewsTag>大盘异动</NewsTag>
        <NewsTime size={42} track={-0.025}>13:03</NewsTime>
        <NewsText>机器人执行器异动拉升</NewsText>
        <Chevron width={16} height={31} />
        <Handle>
          <HandleIcon />
        </Handle>
      </News>

      <TableHead>
        <Tools>
          <RotateIcon />
          <GridIcon />
          <ListIcon />
          <NutIcon />
        </Tools>
        <HeadCell width={200}>最新</HeadCell>
        <HeadCell width={235}>涨幅</HeadCell>
        <HeadCell width={235}>涨跌</HeadCell>
      </TableHead>

      <List>
        {stocks.map((s) => (
          <Row key={s.code} pinned={s.pinned ? 1 : undefined} down={s.down ? 1 : undefined}>
            <Stock>
              <StockName>{s.name}</StockName>
              <StockCode>
                <Num size={36.5}>{s.code}</Num>
                {s.margin && <Badge>融</Badge>}
              </StockCode>
            </Stock>
            <Cell width={241}>
              <Num size={54.5}>{s.last}</Num>
            </Cell>
            <Cell width={238}>
              <Num size={54.5} track={-0.046}>{s.pct}</Num>
            </Cell>
            <Cell width={232}>
              <Num size={54.5} track={-0.04}>{s.diff}</Num>
            </Cell>
          </Row>
        ))}
      </List>

      <TabBar>
        {tabs.map(({ label, Icon, active, promo }) => (
          <Tab key={label} active={active ? 1 : undefined}>
            <Icon />
            {label}
            {promo && <Promo />}
          </Tab>
        ))}
      </TabBar>
      <HomeBar />
    </Screen>
  );
}
